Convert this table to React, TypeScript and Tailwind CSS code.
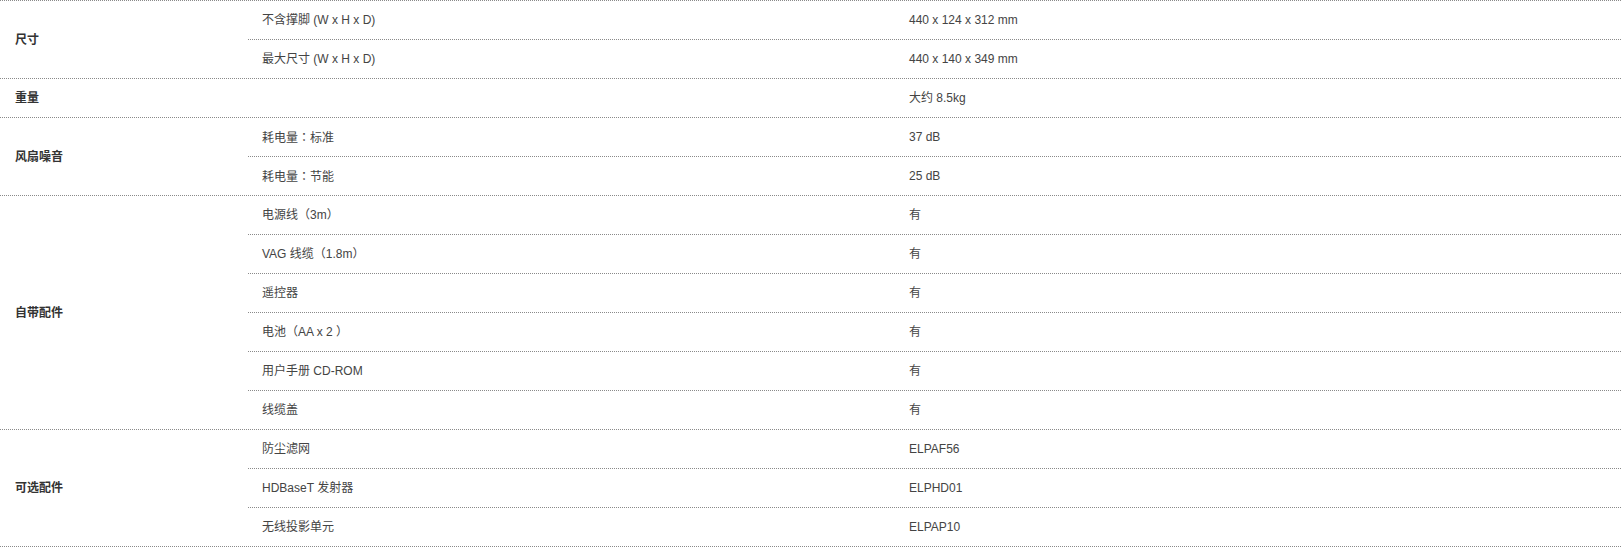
import type { ReactNode } from 'react';

const Colon = () => (
  <span style={{ fontFamily: '"Noto Sans CJK TC", sans-serif' }}>：</span>
);

const specs: { label: string; rows: [ReactNode, string][] }[] = [
  {
    label: '尺寸',
    rows: [
      ['不含撑脚 (W x H x D)', '440 x 124 x 312 mm'],
      ['最大尺寸 (W x H x D)', '440 x 140 x 349 mm'],
    ],
  },
  { label: '重量', rows: [['', '大约 8.5kg']] },
  {
    label: '风扇噪音',
    rows: [
      [<>耗电量<Colon />标准</>, '37 dB'],
      [<>耗电量<Colon />节能</>, '25 dB'],
    ],
  },
  {
    label: '自带配件',
    rows: [
      ['电源线（3m）', '有'],
      ['VAG 线缆（1.8m）', '有'],
      ['遥控器', '有'],
      ['电池（AA x 2 ）', '有'],
      ['用户手册 CD-ROM', '有'],
      ['线缆盖', '有'],
    ],
  },
  {
    label: '可选配件',
    rows: [
      ['防尘滤网', 'ELPAF56'],
      ['HDBaseT 发射器', 'ELPHD01'],
      ['无线投影单元', 'ELPAP10'],
    ],
  },
];

export default function App() {
  return (
    <div
      className="w-full bg-white text-[12px] text-[#444]"
      style={{ fontFamily: '"Liberation Sans", Arial, "Noto Sans CJK SC", sans-serif' }}
    >
      <div className="border-b border-dotted border-[#8a8a8a]">
        {specs.map((group) => (
          <div key={group.label} className="flex border-t border-dotted border-[#8a8a8a]">
            <div className="flex w-[248px] shrink-0 items-center pl-[15px] font-bold text-[#333]">
              {group.label}
            </div>
            <div className="flex flex-1 flex-col">
              {group.rows.map(([name, value], i) => (
                <div
                  key={i}
                  className={
                    i === 0
                      ? 'flex h-[38px] items-center'
                      : 'flex h-[39px] items-center border-t border-dotted border-[#8a8a8a]'
                  }
                >
                  <div className="w-[645px] shrink-0 pl-[14px]">{name}</div>
                  <div className="flex-1 pl-[16px]">{value}</div>
                </div>
              ))}
            </div>
          </div>
        ))}
      </div>
    </div>
  );
}
